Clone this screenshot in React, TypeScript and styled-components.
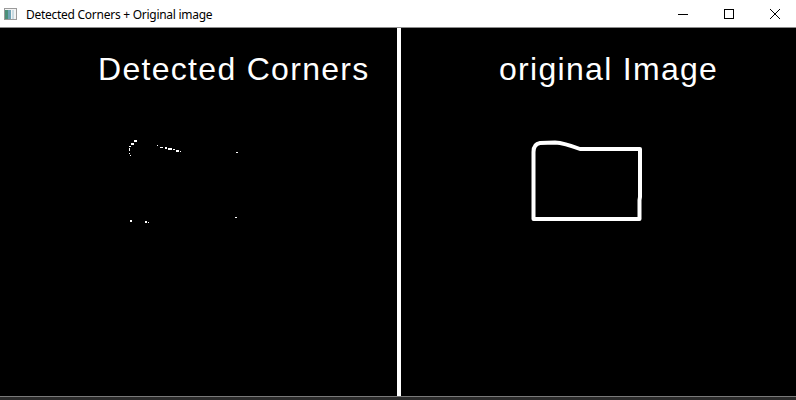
import React from 'react';
import styled, { createGlobalStyle } from 'styled-components';

const GlobalStyle = createGlobalStyle`
  html, body { margin: 0; padding: 0; background: #000; }
  body { width: 796px; height: 400px; overflow: hidden; }
`;

type Dot = [number, number, number, number];

// corner points picked up by the detector, left panel coords
const cornerDots: Dot[] = [
  [134, 140, 3, 2], [131, 143, 3, 2], [129, 146, 2, 1], [129, 148, 1, 3],
  [129, 153, 1, 1], [130, 155, 1, 1], [157, 145, 1, 1], [160, 147, 3, 1],
  [165, 147, 2, 2], [168, 148, 4, 2], [173, 149, 2, 1], [176, 150, 3, 2],
  [180, 151, 1, 1], [236, 152, 2, 1], [130, 220, 2, 2], [145, 221, 2, 2],
  [148, 222, 1, 1], [235, 217, 2, 1],
];

const WindowApp: React.FC = () => {
  return (
    <Window>
      <GlobalStyle />
      <TitleBar>
        <TitleLeft>
          <AppIcon width="13" height="12" viewBox="0 0 13 12">
            <rect x="0.5" y="0.5" width="12" height="11" fill="#f4f4f4" stroke="#9a9a9a" />
            <rect x="1" y="2" width="6" height="9" fill="#6fa3b5" />
            <rect x="1" y="2" width="3" height="9" fill="#4b8f7a" />
            <rect x="8" y="2" width="2" height="9" fill="#c9dbe2" />
          </AppIcon>
          <TitleText>Detected Corners + Original image</TitleText>
        </TitleLeft>
        <Controls>
          <ControlButton>
            <svg width="10" height="10" viewBox="0 0 10 10">
              <line x1="0" y1="5.5" x2="10" y2="5.5" stroke="#000" strokeWidth="1" />
            </svg>
          </ControlButton>
          <ControlButton>
            <svg width="10" height="10" viewBox="0 0 10 10">
              <rect x="0.5" y="0.5" width="9" height="9" fill="none" stroke="#000" strokeWidth="1" />
            </svg>
          </ControlButton>
          <ControlButton>
            <svg width="10" height="10" viewBox="0 0 10 10">
              <path d="M0 0 L10 10 M10 0 L0 10" stroke="#000" strokeWidth="1" />
            </svg>
          </ControlButton>
        </Controls>
      </TitleBar>

      <Canvas>
        <Panel>
          <PanelLabel>Detected Corners</PanelLabel>
          <Drawing viewBox="0 0 397 368" width="397" height="368">
            {cornerDots.map(([x, y, w, h], i) => (
              <rect key={i} x={x} y={y - 28} width={w} height={h} fill="#fff" />
            ))}
          </Drawing>
        </Panel>
        <Divider />
        <Panel>
          <PanelLabel>original Image</PanelLabel>
          <Drawing viewBox="0 0 395 368" width="395" height="368">
            <path
              d="M132.5 191 L132.5 124 Q132.5 116 139 115 L154 114.5 Q163 115 179 121 L239 121 L239 169 L238.5 172 L238.5 191 Z"
              fill="none"
              stroke="#fff"
              strokeWidth="4"
              strokeLinejoin="round"
            />
          </Drawing>
        </Panel>
      </Canvas>
      <BottomEdge />
    </Window>
  );
};

export default WindowApp;

const Window = styled.div`
  width: 796px;
  height: 400px;
  display: flex;
  flex-direction: column;
  background: #000;
`;

const TitleBar = styled.div`
  height: 27px;
  flex: none;
  display: flex;
  align-items: center;
  justify-content: space-between;
  background: #fff;
  border-bottom: 1px solid #8c8c8c;
  overflow: hidden;
`;

const TitleLeft = styled.div`
  display: flex;
  align-items: center;
  padding-left: 4px;
  gap: 9px;
`;

const AppIcon = styled.svg`
  display: block;
  margin-top: 1px;
`;

const TitleText = styled.span`
  font-family: 'Noto Sans', 'Open Sans', sans-serif;
  font-size: 12px;
  color: #000;
  letter-spacing: -0.27px;
  margin-top: 1px;
`;

const Controls = styled.div`
  display: flex;
  height: 100%;
  margin-right: -2px;
`;

const ControlButton = styled.div`
  width: 46px;
  height: 100%;
  display: flex;
  align-items: center;
  justify-content: center;

  svg { display: block; }
`;

const Canvas = styled.div`
  flex: 1;
  display: grid;
  grid-template-columns: 397px 4px 1fr;
  background: #000;
`;

const Panel = styled.div`
  position: relative;
  overflow: hidden;
  padding: 23px 0 0 98px;
`;

const PanelLabel = styled.div`
  position: relative;
  z-index: 1;
  font-family: 'Liberation Sans', Arial, sans-serif;
  font-size: 32px;
  line-height: 36px;
  letter-spacing: 1.3px;
  color: #fff;
  white-space: nowrap;
`;

const Drawing = styled.svg`
  position: absolute;
  left: 0;
  top: 0;
  display: block;
`;

const Divider = styled.div`
  background: #fff;
`;

const BottomEdge = styled.div`
  height: 3px;
  flex: none;
  background: #2b2b2b;
  border-top: 1px solid #7a7a7a;
`;
